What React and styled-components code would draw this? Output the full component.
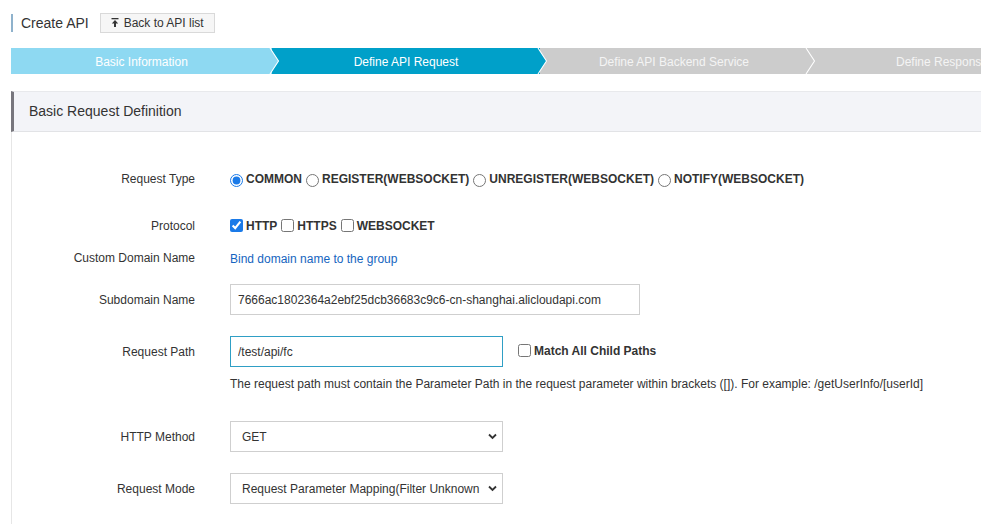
import React from "react";
import styled, { createGlobalStyle } from "styled-components";

const Global = createGlobalStyle`
  html, body { margin: 0; padding: 0; overflow: hidden; background: #fff; }
  body { font-family: "Liberation Sans", Arial, sans-serif; color: #333; }
  * { box-sizing: border-box; }
`;

const Page = styled.div`
  width: 1200px;
  padding: 13px 0 0 11px;
`;

const TitleRow = styled.div`
  display: flex;
  align-items: center;
  height: 19px;
`;

const Title = styled.h1`
  margin: 0;
  font-size: 14px;
  font-weight: normal;
  color: #333;
  border-left: 2px solid #8fb2cc;
  padding-left: 8px;
  line-height: 18px;
`;

const BackButton = styled.button`
  margin-left: 11px;
  height: 20px;
  width: 115px;
  display: inline-flex;
  align-items: center;
  justify-content: center;
  gap: 5px;
  background: #f6f6f6;
  border: 1px solid #d9d9d9;
  border-radius: 0;
  font-family: inherit;
  font-size: 12px;
  color: #333;
  padding: 0;
`;

const Steps = styled.div`
  display: flex;
  margin-top: 16px;
  height: 26px;
`;

const Step = styled.div`
  position: relative;
  flex: 0 0 ${(p) => p.$w}px;
  background: ${(p) => p.$bg};
  color: ${(p) => p.$fg};
  font-size: 12px;
  padding-top: 2px;
  display: flex;
  align-items: center;
  justify-content: center;
  z-index: ${(p) => p.$z};
`;

const Arrow = styled.svg`
  position: absolute;
  left: calc(100% - 2px);
  top: 0;
  width: 10px;
  height: 26px;
  overflow: visible;
`;

const Panel = styled.section`
  margin-top: 17px;
`;

const PanelHeader = styled.div`
  height: 41px;
  background: #f3f4f8;
  border-top: 1px solid #e8e9ec;
  border-bottom: 1px solid #e2e3e6;
  border-left: 3px solid #77767d;
  padding-left: 15px;
  padding-bottom: 2px;
  display: flex;
  align-items: center;
  font-size: 14px;
  color: #333;
`;

const PanelBody = styled.div`
  border-left: 1px solid #e6e6e6;
  padding-top: 32px;
  padding-bottom: 40px;
`;

const Row = styled.div`
  display: flex;
  align-items: center;
  min-height: ${(p) => p.$h || 30}px;
  margin-top: ${(p) => p.$mt || 0}px;
`;

const Label = styled.div`
  flex: 0 0 183px;
  text-align: right;
  font-size: 12px;
  color: #333;
  margin-right: 35px;
`;

const Options = styled.div`
  display: flex;
  align-items: center;
  gap: 4px;
`;

const Option = styled.label`
  display: inline-flex;
  align-items: center;
  gap: 3px;
  font-size: 12px;
  font-weight: bold;
  color: #333;
`;

const Radio = styled.input.attrs({ type: "radio" })`
  margin: 2px 0 0 0;
  width: 13px;
  height: 13px;
  accent-color: #1a7ae8;
`;

const Check = styled.input.attrs({ type: "checkbox" })`
  margin: 0 0 2px 0;
  width: 13px;
  height: 13px;
  accent-color: #1a7ae8;
`;

const Link = styled.a`
  font-size: 12px;
  color: #1565c0;
  text-decoration: none;
  padding-top: 2px;
`;

const TextInput = styled.input`
  width: ${(p) => p.$w}px;
  height: 31px;
  border: 1px solid ${(p) => (p.$active ? "#2f9fc5" : "#cfcfcf")};
  border-radius: 0;
  padding: 0 7px;
  font-family: inherit;
  font-size: 12px;
  color: #333;
  outline: none;
`;

const SideCheck = styled(Option)`
  margin-left: 15px;
  margin-top: -1px;
`;

const Help = styled.div`
  font-size: 12px;
  color: #333;
  line-height: 16px;
  padding-top: 2px;
`;

const SelectWrap = styled.div`
  position: relative;
  width: 273px;
  height: 31px;
`;

const Select = styled.select`
  appearance: none;
  -webkit-appearance: none;
  width: 100%;
  height: 100%;
  border: 1px solid #cfcfcf;
  border-radius: 0;
  background: #fff;
  padding: 0 22px 0 11px;
  font-family: inherit;
  font-size: 12px;
  color: #333;
  outline: none;
`;

const Chevron = styled.svg`
  position: absolute;
  right: 6px;
  top: 12px;
  width: 9px;
  height: 7px;
  pointer-events: none;
`;

const steps = [
  { label: "Basic Information", w: 261, bg: "#8ed9f2", fg: "#ffffff" },
  { label: "Define API Request", w: 268, bg: "#00a0c9", fg: "#ffffff" },
  { label: "Define API Backend Service", w: 268, bg: "#cccccc", fg: "#f4f4f4" },
  { label: "Define Response", w: 268, bg: "#cccccc", fg: "#f4f4f4" },
];

function UploadIcon() {
  return (
    <svg width="8" height="9" viewBox="0 0 8 9">
      <rect x="0.5" y="0" width="7" height="1.3" fill="#333" />
      <path d="M4 2 L7.2 5.4 H5 V9 H3 V5.4 H0.8 Z" fill="#333" />
    </svg>
  );
}

export default function App() {
  return (
    <>
      <Global />
      <Page>
        <TitleRow>
          <Title>Create API</Title>
          <BackButton>
            <UploadIcon />
            Back to API list
          </BackButton>
        </TitleRow>

        <Steps>
          {steps.map((s, i) => (
            <Step key={s.label} $w={s.w} $bg={s.bg} $fg={s.fg} $z={10 - i}>
              {s.label}
              <Arrow viewBox="0 0 10 26">
                <polygon points="0,0 8.5,13 0,26" fill={s.bg} />
                <polyline points="0,0 8.5,13 0,26" fill="none" stroke="#fff" strokeWidth="1.1" />
              </Arrow>
            </Step>
          ))}
        </Steps>

        <Panel>
          <PanelHeader>Basic Request Definition</PanelHeader>
          <PanelBody>
            <Row>
              <Label>Request Type</Label>
              <Options>
                <Option><Radio name="rt" defaultChecked />COMMON</Option>
                <Option><Radio name="rt" />REGISTER(WEBSOCKET)</Option>
                <Option><Radio name="rt" />UNREGISTER(WEBSOCKET)</Option>
                <Option><Radio name="rt" />NOTIFY(WEBSOCKET)</Option>
              </Options>
            </Row>

            <Row $mt={17}>
              <Label>Protocol</Label>
              <Options>
                <Option><Check defaultChecked />HTTP</Option>
                <Option><Check />HTTPS</Option>
                <Option><Check />WEBSOCKET</Option>
              </Options>
            </Row>

            <Row $mt={2}>
              <Label>Custom Domain Name</Label>
              <Link href="#">Bind domain name to the group</Link>
            </Row>

            <Row $mt={11} $h={31}>
              <Label>Subdomain Name</Label>
              <TextInput $w={410} readOnly value="7666ac1802364a2ebf25dcb36683c9c6-cn-shanghai.alicloudapi.com" />
            </Row>

            <Row $mt={21} $h={31}>
              <Label>Request Path</Label>
              <TextInput $w={273} $active readOnly value="/test/api/fc" />
              <SideCheck><Check />Match All Child Paths</SideCheck>
            </Row>

            <Row $mt={7} $h={16}>
              <Label />
              <Help>
                The request path must contain the Parameter Path in the request parameter within brackets ([]). For example: /getUserInfo/[userId]
              </Help>
            </Row>

            <Row $mt={29} $h={31}>
              <Label>HTTP Method</Label>
              <SelectWrap>
                <Select defaultValue="GET">
                  <option>GET</option>
                  <option>POST</option>
                </Select>
                <Chevron viewBox="0 0 9 7">
                  <polyline points="1,1.5 4.5,5 8,1.5" fill="none" stroke="#333" strokeWidth="1.8" />
                </Chevron>
              </SelectWrap>
            </Row>

            <Row $mt={21} $h={31}>
              <Label>Request Mode</Label>
              <SelectWrap>
                <Select defaultValue="map">
                  <option value="map">Request Parameter Mapping(Filter Unknown Parameters)</option>
                </Select>
                <Chevron viewBox="0 0 9 7">
                  <polyline points="1,1.5 4.5,5 8,1.5" fill="none" stroke="#333" strokeWidth="1.8" />
                </Chevron>
              </SelectWrap>
            </Row>
          </PanelBody>
        </Panel>
      </Page>
    </>
  );
}
